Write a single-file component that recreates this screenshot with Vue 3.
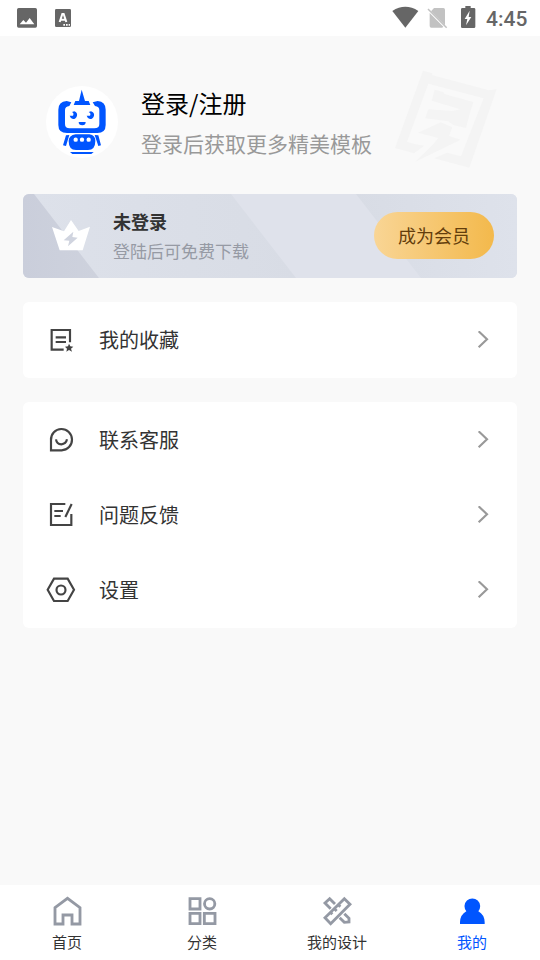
<script setup>
const groups = [
  [{ icon: 'favorite', label: '我的收藏' }],
  [
    { icon: 'service', label: '联系客服' },
    { icon: 'feedback', label: '问题反馈' },
    { icon: 'settings', label: '设置' },
  ],
]
const tabs = [
  { icon: 'home', label: '首页' },
  { icon: 'category', label: '分类' },
  { icon: 'design', label: '我的设计' },
  { icon: 'mine', label: '我的', active: true },
]
</script>

<template>
  <div class="screen">
    <header class="status">
      <svg class="status-left" width="60" height="24" viewBox="48 18 180 72">
        <path fill="#666" fill-rule="evenodd" d="M56 24H106Q111 24 111 29V78Q111 83 106 83H56Q51 83 51 78V29Q51 24 56 24ZM59 73H103L89 54L78 68L70 60Z" />
        <rect x="165" y="27" width="48" height="54" rx="4" fill="#666" />
        <path fill="none" stroke="#fff" stroke-width="6" d="M179 66L187 42H191L199 66M182 59H196" />
        <path fill="#fff" d="M190 72h5v5h-5zM198 72h5v5h-5zM206 72h4v5h-4z" />
      </svg>
      <svg class="status-right" width="86" height="26" viewBox="33 15 258 78">
        <path fill="#666" d="M37 33Q76 8 115 33L76 83Z" />
        <path fill="#c2c2c2" d="M162 24H190Q195 24 195 29V76L153 34ZM149 39L190 80Q188 83 185 83H154Q149 83 149 78Z" />
        <path stroke="#c2c2c2" stroke-width="4.5" d="M144 27L200 83" />
        <path fill="#666" d="M256 18H272V24H282Q286 24 286 28V80Q286 84 282 84H247Q243 84 243 80V28Q243 24 247 24H256Z" />
        <path fill="#fff" d="M269 32L254 57H262L258 76L274 51H266Z" />
      </svg>
      <span class="time">4:45</span>
    </header>

    <section class="profile">
      <svg class="avatar" width="72" height="72" viewBox="30 30 216 216">
        <circle cx="138" cy="138" r="108" fill="#fff" />
        <g fill="#05f">
          <path d="M137 41L147 75H158L163 87H113L118 75H129Z" />
          <path fill-rule="evenodd" d="M92 75L106 79L100 90Q87 91 87 103V144Q87 157 101 157H175Q190 157 190 144V103Q190 91 177 90L170 79L185 75Q209 77 209 101V147Q209 171 184 171H93Q67 171 67 147V101Q67 77 92 75Z" />
          <path d="M108 108L115 106Q125 110 123 119Q120 129 111 129Q103 127 101 119L111 119Q115 112 108 108Z" />
          <path d="M158 108L165 106Q176 110 174 119Q171 129 162 129Q154 127 152 119L162 119Q166 112 158 108Z" />
          <path d="M128 138H149Q149 148 139 148Q128 148 128 138Z" />
          <path d="M119 175H160Q179 178 178 195Q178 222 156 222H120Q98 222 98 195Q98 178 119 175Z" />
          <path d="M90 178L100 177L90 210L81 208ZM176 177L187 178L195 208L187 210Z" />
          <path d="M102 228H173L166 234H109Z" />
        </g>
        <g fill="#fff">
          <circle cx="119" cy="191" r="6.5" />
          <circle cx="138" cy="191" r="6.5" />
          <circle cx="158" cy="191" r="6.5" />
        </g>
      </svg>
      <div class="who">
        <div class="login">登录/注册</div>
        <div class="hint">登录后获取更多精美模板</div>
      </div>
      <svg class="watermark" width="104" height="100" viewBox="42 30 312 300">
        <g fill="#f4f4f4">
          <path d="M129 32L155 39L158 46L327 91L350 87L268 323L162 295L201 278L243 289L311 115L145 71L81 245L103 252L132 257L102 280L45 264Z" />
          <path d="M164 89L190 96L193 102L280 126L267 169L258 204L222 196L204 184L136 175L145 148L216 153L241 148L155 122Z" />
          <path d="M182 187L217 202L207 228L242 239L106 305L158 255L175 234L114 218Z" />
        </g>
      </svg>
    </section>

    <section class="member">
      <svg class="member-bg" width="494" height="84" viewBox="0 0 494 84" preserveAspectRatio="none">
        <defs>
          <linearGradient id="shadeA"><stop offset="0" stop-color="#cacedb" /><stop offset="1" stop-color="#ced2dd" /></linearGradient>
          <linearGradient id="shadeB"><stop offset="0" stop-color="#dde1ea" /><stop offset="1" stop-color="#d8dce5" /></linearGradient>
          <linearGradient id="shadeC"><stop offset="0" stop-color="#d8dce5" /><stop offset="1" stop-color="#dee2eb" /></linearGradient>
        </defs>
        <rect width="494" height="84" fill="#dfe2eb" />
        <path fill="url(#shadeB)" d="M11 0H208L273 84H76Z" />
        <path fill="url(#shadeA)" d="M0 0H11L76 84H0Z" />
        <path fill="url(#shadeC)" d="M333 0H494V84H398Z" />
      </svg>
      <svg class="crown" width="38" height="31" viewBox="110 104 114 93">
        <path fill="#fff" d="M167 104L190 137L224 124L202 195H133L110 125L146 138Z" />
        <path fill="#d0d4df" d="M174 139L145 165L162 166L158 183L187 157L171 155Z" />
      </svg>
      <div class="member-text">
        <div class="member-title">未登录</div>
        <div class="member-sub">登陆后可免费下载</div>
      </div>
      <button class="join">成为会员</button>
    </section>

    <section v-for="(group, g) in groups" :key="g" class="group">
      <div v-for="row in group" :key="row.icon" class="row">
        <svg v-if="row.icon === 'favorite'" class="row-icon" viewBox="93 90 90 90">
          <path class="line" d="M165 142V105H110V164H146M122 127H153M122 141H153" />
          <path fill="#444" d="M162 146L166 154L175 155L168 161L171 170L162 165L154 170L156 161L150 155L159 154Z" />
        </svg>
        <svg v-else-if="row.icon === 'service'" class="row-icon" viewBox="93 390 90 90">
          <path class="line" d="M108 466V435A31.5 32 0 1 1 140 466ZM123 433Q125 447 139 448Q153 447 156 433" />
        </svg>
        <svg v-else-if="row.icon === 'feedback'" class="row-icon" viewBox="93 30 90 90">
          <path class="line" d="M151 42H108V105H169V72M118 63H144M118 78H137M170 42L151 81" />
        </svg>
        <svg v-else class="row-icon" viewBox="93 255 90 90">
          <path class="line" d="M117 266H158L177 299L158 333H117L98 299Z" />
          <circle class="line" cx="138" cy="300" r="13.5" />
        </svg>
        <span class="row-label">{{ row.label }}</span>
        <svg class="chevron" width="12" height="18" viewBox="111 108 36 54">
          <path d="M116 109L141 133L116 157" />
        </svg>
      </div>
    </section>

    <nav class="tabs">
      <div v-for="tab in tabs" :key="tab.icon" class="tab" :class="{ active: tab.active }">
        <svg v-if="tab.icon === 'home'" class="tab-icon" viewBox="156 63 90 90">
          <path class="tab-line" d="M165 98L202.500 70L240 98V147H216V120H189V147H165Z" />
        </svg>
        <svg v-else-if="tab.icon === 'category'" class="tab-icon" viewBox="561 63 90 90">
          <path class="tab-line" d="M570 71H600V102H570ZM570 115H600V146H570ZM613 115H645V146H613Z" />
          <circle class="tab-line" cx="629" cy="86.500" r="15.500" />
        </svg>
        <svg v-else-if="tab.icon === 'design'" class="tab-icon" viewBox="156 63 90 90">
          <path class="tab-line" d="M223 71L240 88L182 146L165 128ZM181 112L187 118M193 101L200 108M205 89L211 95" />
          <path class="tab-line" d="M182 101L165 84L179 71L195 87M223 116L237 130V141L223 142L209 128" />
        </svg>
        <svg v-else class="tab-icon" viewBox="561 63 90 90">
          <path fill="#05f" d="M589 109A23.500 23.500 0 1 1 625 109Q643 119 644 141V147H570V141Q571 119 589 109Z" />
        </svg>
        <span>{{ tab.label }}</span>
      </div>
    </nav>
  </div>
</template>

<style>
body {
  margin: 0;
  background: #f9f9f9;
}
</style>

<style scoped>
.screen {
  display: flex;
  flex-direction: column;
  width: 540px;
  height: 960px;
  overflow: hidden;
  background: #f9f9f9;
  font-family: "Noto Sans CJK SC", sans-serif;
}
svg {
  display: block;
  flex: none;
}
.status {
  display: flex;
  align-items: flex-start;
  height: 36px;
  background: #fff;
  box-sizing: border-box;
  padding: 5px 12px 0 16px;
}
.status-left {
  margin-top: 1px;
}
.status-right {
  margin-left: auto;
}
.time {
  width: 42px;
  margin-left: 9px;
  font: 500 21px/28px Roboto, sans-serif;
  color: #666;
  white-space: nowrap;
}
.profile {
  display: flex;
  align-items: flex-start;
  height: 158px;
  box-sizing: border-box;
  padding: 34px 42px 0 46px;
}
.avatar {
  margin-top: 16px;
}
.who {
  margin: 15px 0 0 23px;
  white-space: nowrap;
}
.login {
  font-size: 24px;
  line-height: 36px;
  color: #000;
}
.hint {
  margin-top: 7px;
  font-size: 21px;
  line-height: 31px;
  color: #999;
}
.watermark {
  margin-left: auto;
}
.member {
  position: relative;
  display: flex;
  align-items: center;
  flex: none;
  height: 83.5px;
  margin: 0 23px 24.5px;
  padding: 0 23px 0 29px;
  box-sizing: border-box;
  border-radius: 6px;
  overflow: hidden;
}
.member-bg {
  position: absolute;
  inset: 0;
}
.crown,
.member-text,
.join {
  position: relative;
}
.member-text {
  margin-left: 23px;
  white-space: nowrap;
}
.member-title {
  font-size: 18px;
  line-height: 28px;
  font-weight: 700;
  color: #333;
}
.member-sub {
  margin-top: 2px;
  font-size: 17px;
  line-height: 28px;
  color: #969aa4;
}
.join {
  width: 120px;
  height: 47px;
  margin-left: auto;
  padding: 0;
  border: 0;
  border-radius: 24px;
  background: linear-gradient(90deg, #f9d595, #f3b94c);
  font: 18px/47px "Noto Sans CJK SC", sans-serif;
  color: #633d0c;
}
.group {
  flex: none;
  margin: 0 23px 24px;
  padding: 0.5px 0;
  border-radius: 6px;
  background: #fff;
}
.row {
  display: flex;
  align-items: center;
  height: 75px;
  padding: 0 28px 0 23px;
}
.row-icon {
  width: 30px;
  height: 30px;
}
.line {
  fill: none;
  stroke: #444;
  stroke-width: 6.5;
}
.row-label {
  margin-left: 23px;
  font-size: 20px;
  line-height: 30px;
  color: #333;
}
.chevron {
  margin-left: auto;
}
.chevron path {
  fill: none;
  stroke: #999;
  stroke-width: 6.5;
}
.tabs {
  display: flex;
  height: 75px;
  margin-top: auto;
  background: #fff;
}
.tab {
  display: flex;
  flex: 1;
  flex-direction: column;
  align-items: center;
  padding: 11px 1px 0 0;
  font-size: 15px;
  line-height: 22px;
  color: #333;
}
.tab span {
  margin-top: 5px;
}
.tab.active {
  color: #05f;
}
.tab-icon {
  width: 30px;
  height: 30px;
}
.tab-line {
  fill: none;
  stroke: #9499a4;
  stroke-width: 8.5;
}
</style>
